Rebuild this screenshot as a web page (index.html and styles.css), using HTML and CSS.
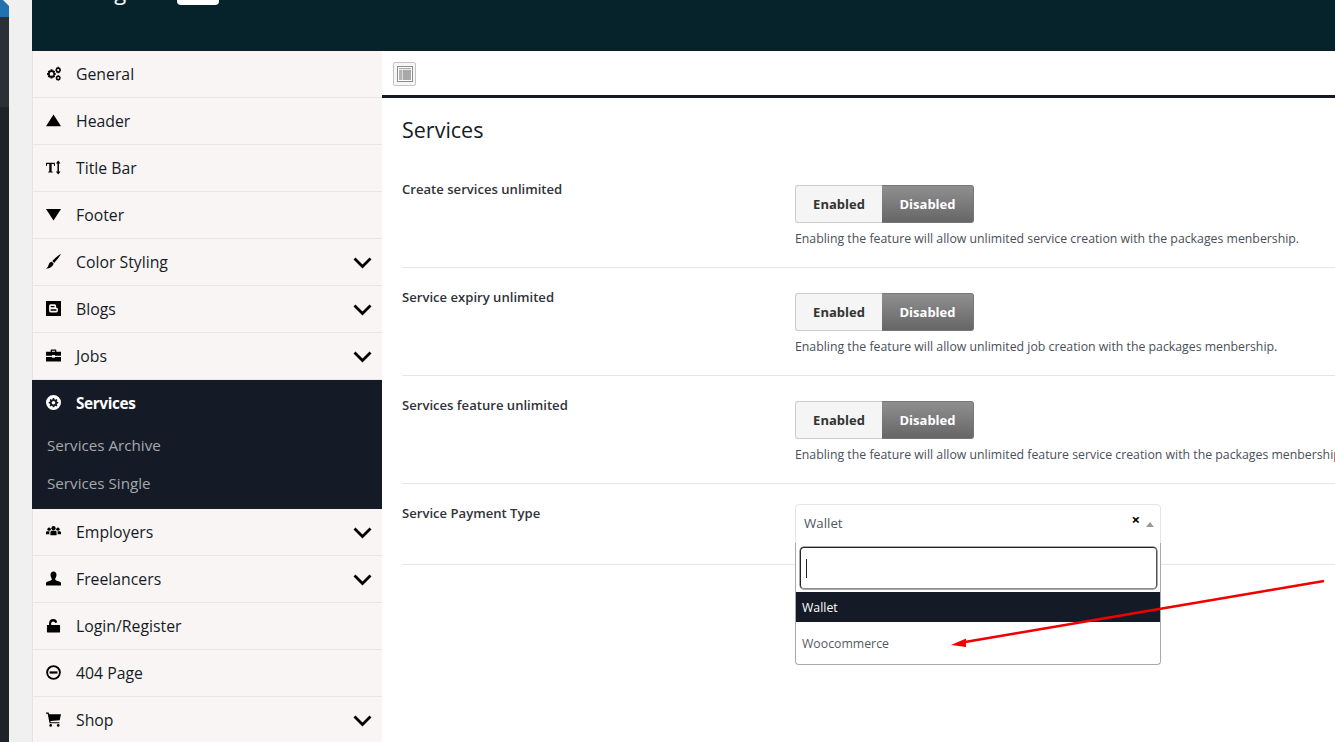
FILE: index.html
```html
<!DOCTYPE html>
<html lang="en">
<head>
<meta charset="utf-8">
<title>Services</title>
<link rel="stylesheet" href="styles.css">
</head>
<body>
<div class="wp-edge"><svg class="wp-tri" width="9" height="17" viewBox="0 0 9 17"><path d="M0 0H9V17H0Z" fill="#f0f0f1"/><path d="M0 0H3L9 6V17H0Z" fill="#2271b1"/></svg></div>
<div class="gutter"></div>
<div class="app">
  <header class="topbar"><span class="brand">Settings</span><span class="pill"></span></header>
  <div class="body">
    <nav class="side">
      <a class="item"><svg class="ic" viewBox="0 0 16 16"><g fill="#000"><path fill-rule="evenodd" d="M4.900 3.500H6.900L7.200 5 8.300 4.500 9.700 5.900 9 7.100 10.300 7.500V9.500L9 9.900 9.700 11.100 8.300 12.500 7.200 11.900 6.900 13.300H4.900L4.500 11.900 3.400 12.500 1.900 11.100 2.600 9.900 1.200 9.500V7.500L2.600 7.100 1.900 5.900 3.400 4.500 4.500 5ZM5.900 6.500A2 2 0 1 0 5.900 10.500 2 2 0 0 0 5.900 6.500Z"/><path fill-rule="evenodd" d="M12.300.800H13.700L13.900 1.800 14.800 1.500 15.600 2.500 15 3.300 16 3.700V5L15 5.300 15.600 6.200 14.800 7.100 13.900 6.800 13.700 7.800H12.300L12.100 6.800 11.200 7.100 10.400 6.200 11 5.300 10 5V3.700L11 3.300 10.400 2.500 11.200 1.500 12.100 1.800ZM13 3.100A1.200 1.200 0 1 0 13 5.500 1.200 1.200 0 0 0 13 3.100Z"/><path fill-rule="evenodd" d="M12.400 9.700H13.600L13.800 10.600 14.700 10.300 15.400 11.100 14.900 11.800 15.800 12.200V13.300L14.900 13.600 15.400 14.400 14.700 15.100 13.800 14.800 13.600 15.700H12.400L12.200 14.800 11.300 15.100 10.600 14.400 11.100 13.600 10.200 13.300V12.200L11.100 11.800 10.600 11.100 11.300 10.300 12.200 10.600ZM13 11.700A1 1 0 1 0 13 13.700 1 1 0 0 0 13 11.700Z"/></g></svg><span>General</span></a>
      <a class="item"><svg class="ic" viewBox="0 0 16 16"><path d="M8 1.500L16 14H0Z" fill="#000"/></svg><span>Header</span></a>
      <a class="item"><svg class="ic" viewBox="0 0 16 16"><g fill="#000"><path d="M0 3H9.500V6.500H8.700L8.200 4.200H6V12.200L7.200 12.600V13.300H2.300V12.600L3.500 12.200V4.200H1.300L.800 6.500H0Z"/><path d="M13 .500L15.500 3.700H13.800V12.300H15.500L13 15.500 10.500 12.300H12.200V3.700H10.500Z"/></g></svg><span>Title Bar</span></a>
      <a class="item"><svg class="ic" viewBox="0 0 16 16"><path d="M0 2H16L8 14.500Z" fill="#000"/></svg><span>Footer</span></a>
      <a class="item"><svg class="ic" viewBox="0 0 16 16"><g fill="#000"><path d="M15.700 0C16.200.400 11.500 7 8.800 9.500L6.700 7.500C9.300 4.700 15.200-.400 15.700 0Z"/><path d="M6.100 8.200L8.100 10.200C7.600 13 4.500 15.500 0 15.800 1.900 14.400 2.400 13 3 11 3.500 9.300 4.700 8.400 6.100 8.200Z"/></g></svg><span>Color Styling</span><svg class="chev" viewBox="0 0 19 12"><path d="M1.500 1.500L9.500 9.500 17.500 1.500" fill="none" stroke="#000" stroke-width="2.800"/></svg></a>
      <a class="item"><svg class="ic" viewBox="0 0 16 16"><path fill-rule="evenodd" d="M0 0H16V16H0ZM5 3.500A1.700 1.700 0 0 0 3.300 5.300V10.500A1.800 1.800 0 0 0 5 12.300H11A1.800 1.800 0 0 0 12.700 10.500V8.500C12.700 7.800 12 7.300 11.200 7.300H10.800V5.300A1.700 1.700 0 0 0 9 3.500ZM5.500 5.200H8.500A.700.700 0 0 1 8.500 6.600H5.500A.700.700 0 0 1 5.500 5.200ZM5.500 8.800H10.500A.800.800 0 0 1 10.500 10.500H5.500A.800.800 0 0 1 5.500 8.800Z" fill="#000"/></svg><span>Blogs</span><svg class="chev" viewBox="0 0 19 12"><path d="M1.500 1.500L9.500 9.500 17.500 1.500" fill="none" stroke="#000" stroke-width="2.800"/></svg></a>
      <a class="item"><svg class="ic" viewBox="0 0 16 16"><path fill-rule="evenodd" d="M5 2.500A1 1 0 0 1 6 1.500H10A1 1 0 0 1 11 2.500V4H16V8.300H9.500V7.500H6.500V8.300H0V4H5ZM6.300 2.800V4H9.700V2.800ZM0 9.500H6.500V10.500H9.500V9.500H16V14.500H0Z" fill="#000"/></svg><span>Jobs</span><svg class="chev" viewBox="0 0 19 12"><path d="M1.500 1.500L9.500 9.500 17.500 1.500" fill="none" stroke="#000" stroke-width="2.800"/></svg></a>
      <div class="group">
        <a class="item active"><svg class="ic" viewBox="0 0 16 16"><path fill-rule="evenodd" d="M8 0A8 8 0 1 1 8 16 8 8 0 0 1 8 0ZM7.200 3.200L7 4.500 5.900 5 4.800 4.300 3.800 5.300 4.500 6.400 4.100 7.300 2.800 7.500V8.900L4.100 9.200 4.500 10.200 3.800 11.200 4.800 12.200 5.900 11.500 7 12 7.200 13H8.800L9 12 10.100 11.500 11.200 12.200 12.200 11.200 11.500 10.200 11.900 9.200 13.200 8.900V7.500L11.900 7.300 11.500 6.400 12.200 5.300 11.200 4.300 10.100 5 9 4.500 8.800 3.200ZM8 6.300A1.900 1.900 0 1 1 8 10.100 1.900 1.900 0 0 1 8 6.300Z" fill="#fff"/></svg><span>Services</span></a>
        <a class="sub">Services Archive</a>
        <a class="sub">Services Single</a>
      </div>
      <a class="item"><svg class="ic" viewBox="0 0 16 16"><g fill="#000"><circle cx="8" cy="4.500" r="2.300"/><circle cx="3.300" cy="5.500" r="1.800"/><circle cx="12.700" cy="5.500" r="1.800"/><path d="M4.700 12V9C4.700 7.800 5.500 7.200 6.500 7.200H9.500C10.500 7.200 11.300 7.800 11.300 9V12Z"/><path d="M0 11V8.800C0 8 .700 7.600 1.500 7.600H3.800C3.500 8 3.600 8.500 3.600 11Z"/><path d="M16 11V8.800C16 8 15.300 7.600 14.500 7.600H12.200C12.500 8 12.400 8.500 12.400 11Z"/></g></svg><span>Employers</span><svg class="chev" viewBox="0 0 19 12"><path d="M1.500 1.500L9.500 9.500 17.500 1.500" fill="none" stroke="#000" stroke-width="2.800"/></svg></a>
      <a class="item"><svg class="ic" viewBox="0 0 16 16"><path d="M8 .500C10 .500 11.200 2 11.200 4 11.200 6 10.300 7.300 9.800 8.200 9.500 9 10 9.800 11.500 10.300 13.800 11 16 11.300 16 13V15.500H0V13C0 11.300 2.200 11 4.500 10.300 6 9.800 6.500 9 6.200 8.200 5.700 7.300 4.800 6 4.800 4 4.800 2 6 .500 8 .500Z" fill="#000"/></svg><span>Freelancers</span><svg class="chev" viewBox="0 0 19 12"><path d="M1.500 1.500L9.500 9.500 17.500 1.500" fill="none" stroke="#000" stroke-width="2.800"/></svg></a>
      <a class="item"><svg class="ic" viewBox="0 0 16 16"><path fill-rule="evenodd" d="M1 7.500H3.300V5A4.400 4.400 0 0 1 12 4.600L9.900 5.300A2.300 2.300 0 0 0 5.500 5.300V7.500H14.500A.800.800 0 0 1 15 8.300V15A.800.800 0 0 1 14.500 15.500H1.500A.800.800 0 0 1 1 15Z" fill="#000"/></svg><span>Login/Register</span></a>
      <a class="item"><svg class="ic" viewBox="0 0 16 16"><circle cx="8" cy="8" r="6.800" fill="none" stroke="#000" stroke-width="2"/><path d="M3.800 6.800H12.200V9.200H3.800Z" fill="#000"/></svg><span>404 Page</span></a>
      <a class="item"><svg class="ic" viewBox="0 0 16 16"><g fill="#000"><path d="M0 .500H2.800L3.400 2.500H16L14.600 8.700 4.700 9.500 5 10.800H14.300V12H3.800L1.800 1.800H0Z"/><circle cx="5" cy="14.300" r="1.400"/><circle cx="13" cy="14.300" r="1.400"/></g></svg><span>Shop</span><svg class="chev" viewBox="0 0 19 12"><path d="M1.500 1.500L9.500 9.500 17.500 1.500" fill="none" stroke="#000" stroke-width="2.800"/></svg></a>
    </nav>
    <main class="main">
      <div class="toolbar"><span class="tool-btn"><svg width="16" height="16" viewBox="0 0 16 16"><rect x=".500" y=".500" width="15" height="15" fill="#fff" stroke="#8c8c8c"/><rect x="2" y="2" width="12" height="1.200" fill="#a8a8a8"/><rect x="2" y="4" width="3.500" height="10" fill="#b4b4b4"/><rect x="6" y="4" width="8" height="10" fill="#a8a8a8"/></svg></span></div>
      <section class="content">
        <h2 class="title">Services</h2>
        <div class="row">
          <div class="label">Create services unlimited</div>
          <div class="field">
            <div class="switch"><span class="on">Enabled</span><span class="off">Disabled</span></div>
            <p class="desc">Enabling the feature will allow unlimited service creation with the packages menbership.</p>
          </div>
        </div>
        <div class="row">
          <div class="label">Service expiry unlimited</div>
          <div class="field">
            <div class="switch"><span class="on">Enabled</span><span class="off">Disabled</span></div>
            <p class="desc">Enabling the feature will allow unlimited job creation with the packages menbership.</p>
          </div>
        </div>
        <div class="row">
          <div class="label">Services feature unlimited</div>
          <div class="field">
            <div class="switch"><span class="on">Enabled</span><span class="off">Disabled</span></div>
            <p class="desc">Enabling the feature will allow unlimited feature service creation with the packages menbership.</p>
          </div>
        </div>
        <div class="row row-select">
          <div class="label">Service Payment Type</div>
          <div class="field">
            <div class="select">
              <span class="sel-value">Wallet</span>
              <span class="sel-clear">×</span>
              <span class="sel-arrow"></span>
              <div class="dropdown">
                <div class="search"><span class="caret"></span></div>
                <div class="opt opt-on">Wallet</div>
                <div class="opt">Woocommerce</div>
              </div>
            </div>
          </div>
        </div>
      </section>
    </main>
  </div>
</div>
<svg class="arrow" width="1335" height="742" viewBox="0 0 1335 742"><path d="M1324 581L962 642.500" stroke="#f00000" stroke-width="2.600" fill="none"/><path d="M951 645L966 638.500 966 647Z" fill="#f00000"/></svg>
</body>
</html>
```
FILE: styles.css
```css
* { box-sizing: border-box; }
html, body { margin: 0; height: 742px; overflow: hidden; }
body {
  display: flex;
  font-family: "Open Sans", "Noto Sans", "Liberation Sans", sans-serif;
  color: #151b26;
  background: #fff;
}
.wp-edge {
  width: 9px;
  flex: none;
  background: linear-gradient(#2c3036 0, #2c3036 107px, #1d2327 107px);
}
.wp-tri { display: block; }
.gutter { width: 23px; flex: none; background: #f0f0f1; }
.app { flex: 1; min-width: 0; display: flex; flex-direction: column; }
.topbar {
  height: 51px;
  flex: none;
  background: #06232b;
  border-bottom: 1px solid #151b26;
  position: relative;
  overflow: hidden;
}
.brand {
  position: absolute;
  left: 23px;
  top: -22px;
  font-size: 22px;
  line-height: 26px;
  color: #fff;
  font-weight: 500;
  white-space: nowrap;
}
.pill {
  position: absolute;
  left: 145px;
  top: -15px;
  width: 42px;
  height: 20px;
  background: #fff;
  border-radius: 4px;
}
.body { flex: 1; display: flex; min-height: 0; }
.side { width: 350px; flex: none; background: #f9f5f4; overflow: hidden; box-shadow: inset 1px 0 0 #e4e4e4; }
.item {
  height: 47px;
  display: flex;
  align-items: center;
  padding: 0 10px 0 14px;
  border-bottom: 1px solid #e6e6e8;
  font-size: 15.8px;
  font-weight: 500;
  color: #151b26;
}
.ic { width: 15px; height: 15px; flex: none; margin-right: 15px; position: relative; top: -1px; }
.item span { flex: 1; }
.chev { width: 19px; height: 12px; flex: none; position: relative; top: 1px; }
.group { background: #151b26; height: 129px; }
.group .item { height: 46px; border-bottom: 0; color: #fff; font-weight: 700; font-size: 15.3px; letter-spacing: -.35px; }
.sub {
  display: block;
  height: 38px;
  line-height: 38px;
  padding-left: 15px;
  font-size: 15.2px;
  color: #a5a8ad;
}
.main { flex: 1; min-width: 0; overflow: hidden; background: #fff; }
.toolbar {
  height: 47px;
  border-bottom: 3px solid #151b26;
  padding: 11px 0 0 11px;
}
.tool-btn {
  display: flex;
  align-items: center;
  justify-content: center;
  width: 23px;
  height: 24px;
  border: 1px solid #c4c4c4;
  border-radius: 2px;
  background: #f6f6f6;
}
.content { padding: 0 0 0 20px; width: 1100px; }
.title {
  margin: 0;
  height: 62px;
  padding-top: 17px;
  font-size: 21.5px;
  line-height: 30px;
  font-weight: 500;
  color: #151b26;
}
.row {
  display: flex;
  height: 108px;
  padding-top: 23px;
  border-bottom: 1px solid #e6e6e6;
}
.row-select { height: 81px; padding-top: 20px; }
.label {
  width: 393px;
  flex: none;
  font-size: 13.1px;
  line-height: 18px;
  font-weight: 600;
  color: #2f333a;
  margin-top: -3px;
}
.row-select .label { margin-top: 0; }
.field { flex: 1; min-width: 0; }
.switch {
  display: flex;
  width: 179px;
  height: 38px;
  margin-top: 2px;
  font-size: 13px;
  font-weight: 700;
  line-height: 36px;
  text-align: center;
}
.switch span { display: block; }
.on {
  width: 87px;
  color: #333;
  background: #f5f5f5;
  border: 1px solid #ccc;
  border-right: 0;
  border-radius: 3px 0 0 3px;
}
.off {
  width: 92px;
  color: #fff;
  background: linear-gradient(#8f8f8f, #666);
  border: 1px solid #777;
  border-left: 0;
  border-radius: 0 3px 3px 0;
}
.desc {
  margin: 7px 0 0;
  font-size: 12.3px;
  line-height: 18px;
  color: #4a4f57;
  white-space: nowrap;
}
.select {
  width: 366px;
  height: 40px;
  position: relative;
  border: 1px solid #e5e5e8;
  border-radius: 4px 4px 0 0;
  font-size: 13.3px;
  color: #50555c;
  background: #fff;
}
.sel-value { position: absolute; left: 8px; top: 0; line-height: 37px; }
.sel-clear { position: absolute; right: 20px; top: 4px; font-size: 15px; line-height: 20px; font-weight: 700; color: #000; }
.sel-arrow {
  position: absolute;
  right: 6px;
  top: 17px;
  border: 4px solid transparent;
  border-top: 0;
  border-bottom: 5px solid #9a9a9a;
}
.dropdown {
  position: absolute;
  left: -1px;
  right: -1px;
  top: 38px;
  height: 122px;
  background: #fff;
  border: 1px solid #a9a9a9;
  border-top: 0;
  border-radius: 0 0 4px 4px;
  padding-top: 4px;
}
.search {
  margin: 0 3px 0 4px;
  height: 42px;
  border: 1px solid #1f2430;
  border-bottom-color: #8b8e94;
  border-right-color: #50535a;
  border-radius: 4px;
  box-shadow: 0 0 0 .5px #555;
  padding: 11px 5px;
}
.caret { display: block; width: 1px; height: 19px; background: #222; }
.opt { height: 30px; padding-left: 6px; line-height: 32px; font-size: 12.3px; color: #555a62; }
.opt-on { margin-top: 3px; background: #151b26; color: #fff; font-weight: 500; font-size: 12.3px; }
.opt-on + .opt { height: 42px; line-height: 44px; }
.arrow { position: fixed; left: 0; top: 0; pointer-events: none; }
```
